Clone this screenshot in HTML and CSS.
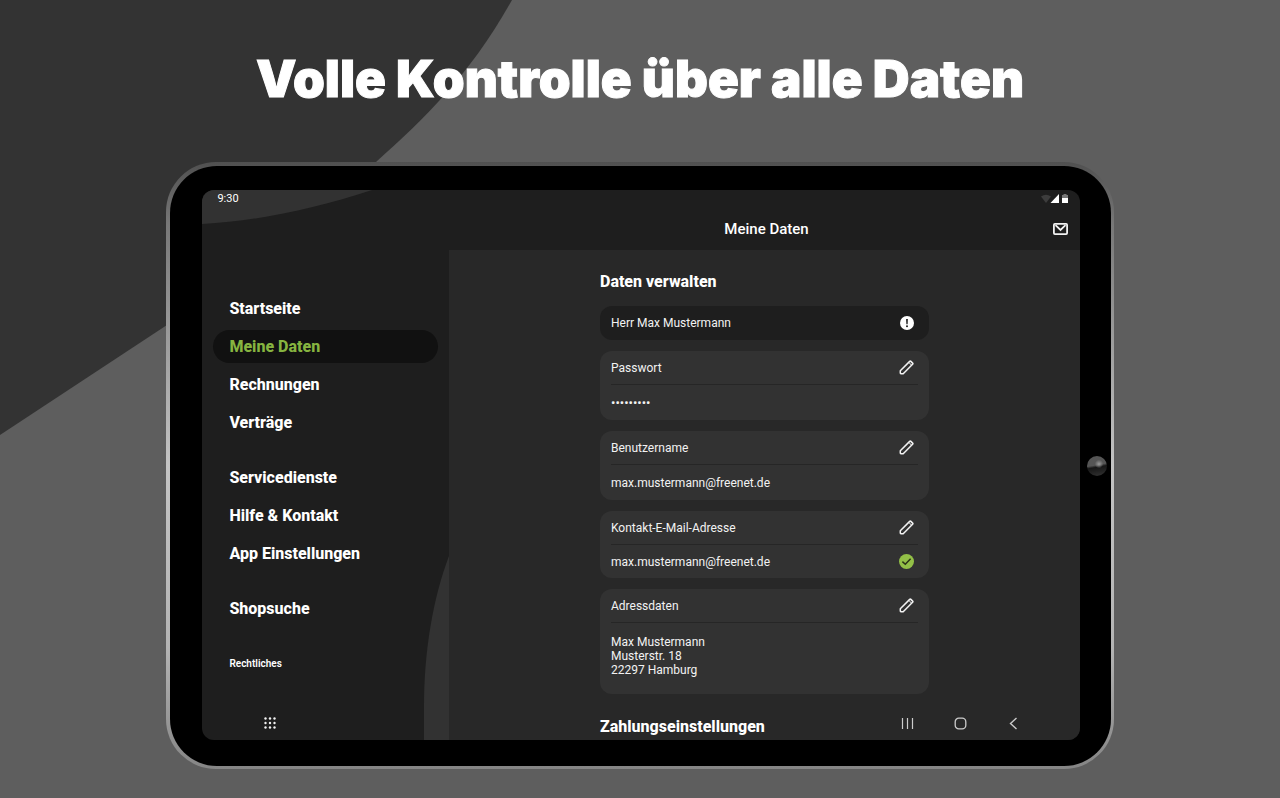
FILE: index.html
```
<!DOCTYPE html>
<html lang="de">

<head>
    <meta charset="UTF-8">
    <meta name="viewport" content="width=device-width, initial-scale=1.0">
    <title>Meine Daten</title>
    <link rel="stylesheet" href="styles.css">
</head>

<body>
    <svg class="page-shape" width="512" height="435" viewBox="0 0 512 435" aria-hidden="true">
        <path d="M0 0H512C470 75 425 118 376 162C310 217 240 275 167 325L0 435Z" fill="#333333" />
    </svg>

    <h1 class="headline">Volle Kontrolle über alle Daten</h1>

    <div class="tablet">
        <div class="bezel">
            <span class="camera"></span>
            <div class="screen">
                <svg class="shape-top" width="170" height="34" viewBox="0 0 170 34" aria-hidden="true">
                    <path d="M0 0H170C112 19 55 31 0 34Z" fill="#323232" />
                </svg>

                <div class="status-bar">
                    <span>9:30</span>
                    <svg width="28" height="10" viewBox="0 0 28 10" aria-hidden="true">
                        <path d="M0 2.5Q5 -1 10 2.5L5 9Z" fill="#3d3d3d" />
                        <path d="M18 0V9H9.500Z" fill="#ffffff" />
                        <path d="M22.500 0H25.500V1H27V4H21V1H22.500Z" fill="#777777" />
                        <path d="M21 4H27V8.500Q27 9 26.500 9H21.500Q21 9 21 8.500Z" fill="#ffffff" />
                    </svg>
                </div>

                <header class="app-bar">
                    <h2>Meine Daten</h2>
                    <button class="icon-btn mail" aria-label="Nachrichten">
                        <svg width="15" height="12" viewBox="0 0 15 12" fill="none" stroke="#f2f2f2" stroke-width="1.800">
                            <rect x="0.900" y="0.900" width="13.200" height="10.200" rx="1" />
                            <path d="M2.500 2.200L7.500 7L12.500 2.200" />
                        </svg>
                    </button>
                </header>

                <div class="columns">
                    <nav class="sidebar">
                        <svg class="shape-bottom" width="25" height="184" viewBox="0 0 25 184" aria-hidden="true">
                            <path d="M25 0V184H0V150C0 95 9 42 25 0Z" fill="#323232" />
                        </svg>
                        <div class="menu-group">
                            <a href="#start">Startseite</a>
                            <a href="#daten" class="active">Meine Daten</a>
                            <a href="#rechnungen">Rechnungen</a>
                            <a href="#vertraege">Verträge</a>
                        </div>
                        <div class="menu-group">
                            <a href="#dienste">Servicedienste</a>
                            <a href="#hilfe">Hilfe &amp; Kontakt</a>
                            <a href="#einstellungen">App Einstellungen</a>
                        </div>
                        <div class="menu-group">
                            <a href="#shops">Shopsuche</a>
                        </div>
                        <div class="menu-group">
                            <a href="#rechtliches" class="small">Rechtliches</a>
                        </div>
                    </nav>

                    <main class="content">
                        <div class="list">
                            <h3>Daten verwalten</h3>

                            <section class="card card-dark">
                                <div class="card-row">
                                    <span>Herr Max Mustermann</span>
                                    <svg width="14" height="14" viewBox="0 0 14 14" aria-hidden="true">
                                        <circle cx="7" cy="7" r="7" fill="#ffffff" />
                                        <path d="M6.100 3H7.900L7.600 8.200H6.400Z" fill="#1e1e1e" />
                                        <circle cx="7" cy="10.300" r="1" fill="#1e1e1e" />
                                    </svg>
                                </div>
                            </section>

                            <section class="card">
                                <div class="card-row card-head">
                                    <span>Passwort</span>
                                    <button class="icon-btn" aria-label="Passwort bearbeiten">
                                        <svg width="15" height="15" viewBox="0 0 15 15"><use href="#pencil" /></svg>
                                    </button>
                                </div>
                                <div class="card-row card-value">
                                    <span class="dots">•••••••••</span>
                                </div>
                            </section>

                            <section class="card">
                                <div class="card-row card-head">
                                    <span>Benutzername</span>
                                    <button class="icon-btn" aria-label="Benutzername bearbeiten">
                                        <svg width="15" height="15" viewBox="0 0 15 15"><use href="#pencil" /></svg>
                                    </button>
                                </div>
                                <div class="card-row card-value">
                                    <span>max.mustermann@freenet.de</span>
                                </div>
                            </section>

                            <section class="card">
                                <div class="card-row card-head">
                                    <span>Kontakt-E-Mail-Adresse</span>
                                    <button class="icon-btn" aria-label="Kontakt-E-Mail-Adresse bearbeiten">
                                        <svg width="15" height="15" viewBox="0 0 15 15"><use href="#pencil" /></svg>
                                    </button>
                                </div>
                                <div class="card-row card-value-short">
                                    <span>max.mustermann@freenet.de</span>
                                    <svg width="15" height="15" viewBox="0 0 15 15" aria-hidden="true">
                                        <circle cx="7.500" cy="7.500" r="7.500" fill="#93c047" />
                                        <path d="M3.400 7.600L6.300 10.300L11.600 4.800" fill="none" stroke="#2b3318" stroke-width="1.500" />
                                    </svg>
                                </div>
                            </section>

                            <section class="card">
                                <div class="card-row card-head">
                                    <span>Adressdaten</span>
                                    <button class="icon-btn" aria-label="Adressdaten bearbeiten">
                                        <svg width="15" height="15" viewBox="0 0 15 15"><use href="#pencil" /></svg>
                                    </button>
                                </div>
                                <address>
                                    Max Mustermann<br>
                                    Musterstr. 18<br>
                                    22297 Hamburg
                                </address>
                            </section>

                            <h3 class="next-title">Zahlungseinstellungen</h3>
                        </div>
                    </main>
                </div>

                <!-- Android navigation, floats over the app -->
                <div class="system-nav">
                    <button class="icon-btn apps" aria-label="Apps">
                        <svg width="14" height="14" viewBox="0 0 14 14" fill="#f2f2f2">
                            <circle cx="2.500" cy="2.500" r="1.200" /><circle cx="7" cy="2.500" r="1.200" /><circle cx="11.500" cy="2.500" r="1.200" />
                            <circle cx="2.500" cy="7" r="1.200" /><circle cx="7" cy="7" r="1.200" /><circle cx="11.500" cy="7" r="1.200" />
                            <circle cx="2.500" cy="11.500" r="1.200" /><circle cx="7" cy="11.500" r="1.200" /><circle cx="11.500" cy="11.500" r="1.200" />
                        </svg>
                    </button>
                    <button class="icon-btn" aria-label="Letzte Apps">
                        <svg width="13" height="13" viewBox="0 0 13 13" stroke="#cccccc" stroke-width="1.200">
                            <path d="M1.500 1V12M6.500 1V12M11.500 1V12" />
                        </svg>
                    </button>
                    <button class="icon-btn" aria-label="Startbildschirm">
                        <svg width="13" height="13" viewBox="0 0 13 13" fill="none" stroke="#cccccc" stroke-width="1.300">
                            <rect x="1.200" y="1.200" width="10.600" height="10.600" rx="3.600" />
                        </svg>
                    </button>
                    <button class="icon-btn" aria-label="Zurück">
                        <svg width="13" height="13" viewBox="0 0 13 13" fill="none" stroke="#cccccc" stroke-width="1.400">
                            <path d="M9.500 1L3.500 6.500L9.500 12" />
                        </svg>
                    </button>
                </div>
            </div>
        </div>
    </div>

    <svg class="sprite" width="0" height="0" aria-hidden="true">
        <symbol id="pencil" viewBox="0 0 15 15">
            <path d="M1.300 10.800L10.700 1.400Q11.300 0.800 11.900 1.400L13.600 3.100Q14.200 3.700 13.600 4.300L4.200 13.700H1.900Q1.300 13.700 1.300 13.100Z" fill="none" stroke="#f2f2f2" stroke-width="1.500" stroke-linejoin="round" />
            <path d="M10 2.600L12.400 5" fill="none" stroke="#f2f2f2" stroke-width="1" />
        </symbol>
    </svg>
</body>

</html>
```
FILE: styles.css
```
* {
    box-sizing: border-box;
    margin: 0;
    padding: 0;
}

body {
    min-height: 100vh;
    padding: 49px 0 30px;
    background-color: #5e5e5e;
    color: #ffffff;
    font-family: Roboto, "Liberation Sans", sans-serif;
}

.page-shape {
    position: absolute;
    top: 0;
    left: 0;
    z-index: -1;
}

.sprite {
    position: absolute;
}

.headline {
    margin-bottom: 53px;
    font-family: Inter, "Liberation Sans", sans-serif;
    font-size: 51px;
    font-weight: 900;
    line-height: 60px;
    text-align: center;
    -webkit-text-stroke: 1px #ffffff;
}

/* tablet */

.tablet {
    width: 74%;
    min-width: 800px;
    margin: 0 auto;
    padding: 4px 3px 3px 4px;
    border-radius: 50px;
    background: linear-gradient(#505050, #777777 10%, #c4c4c4 50%, #b4b4b4 80%, #858585);
}

.bezel {
    position: relative;
    padding: 24px 31px 26px 32px;
    border-radius: 47px;
    background-color: #000000;
}

.camera {
    position: absolute;
    top: 50%;
    right: 4px;
    width: 20px;
    height: 20px;
    margin-top: -10px;
    border-radius: 50%;
    background: radial-gradient(circle at 60% 40%, #999999, transparent 25%), linear-gradient(170deg, #555555 45%, #161616 55%, #333333);
}

.screen {
    position: relative;
    overflow: hidden;
    border-radius: 12px;
    background-color: #1e1e1e;
}

.shape-top {
    position: absolute;
    top: 0;
    left: 0;
}

.status-bar {
    position: relative;
    display: flex;
    align-items: center;
    justify-content: space-between;
    height: 17px;
    padding: 0 11px 0 15px;
    font-size: 11px;
}

.app-bar {
    position: relative;
    display: grid;
    grid-template-columns: 1fr auto 1fr;
    align-items: center;
    height: 43px;
    margin-left: 247px;
    padding: 0 12px 0 16px;
}

.app-bar h2 {
    grid-column: 2;
    font-size: 15px;
    font-weight: 500;
    line-height: 20px;
}

.icon-btn {
    display: flex;
    border: none;
    background: none;
    cursor: pointer;
}

.mail {
    justify-self: end;
}

.columns {
    display: flex;
}

/* sidebar */

.sidebar {
    position: relative;
    flex: 0 0 247px;
    display: flex;
    flex-direction: column;
    gap: 22px;
    padding: 42px 11px 0;
}

.shape-bottom {
    position: absolute;
    right: 0;
    bottom: 0;
}

.menu-group {
    display: flex;
    flex-direction: column;
    gap: 5px;
}

.menu-group a {
    padding: 0 16px;
    border-radius: 17px;
    color: #ffffff;
    font-size: 16px;
    font-weight: 800;
    line-height: 33px;
    text-decoration: none;
}

.menu-group .active {
    background-color: #111111;
    color: #86b440;
}

.menu-group .small {
    font-size: 10px;
    font-weight: 600;
}

/* content */

.content {
    flex: 1;
    padding: 22px 20px 3px;
    background-color: #282828;
}

.list {
    display: flex;
    flex-direction: column;
    gap: 11px;
    max-width: 329px;
    margin: 0 auto;
}

h3 {
    font-size: 16px;
    font-weight: 800;
    line-height: 20px;
}

.list h3:first-child {
    margin-bottom: 3px;
}

.list .next-title {
    margin-top: 12px;
}

.card {
    padding: 0 11px;
    border-radius: 12px;
    background-color: #323232;
    color: #f2f2f2;
    font-size: 12px;
}

.card-dark {
    background-color: #1e1e1e;
}

.card-row {
    display: flex;
    align-items: center;
    justify-content: space-between;
    height: 34px;
    padding-right: 4px;
}

.card-head {
    border-bottom: 1px solid #262626;
}

.card-value {
    height: 35px;
}

.card-value-short {
    height: 33px;
}

.dots {
    font-size: 13px;
}

address {
    padding: 12px 0 17px;
    font-style: normal;
    line-height: 14px;
}

/* system navigation */

.system-nav {
    position: absolute;
    right: 60px;
    bottom: 10px;
    left: 61px;
    display: flex;
    align-items: center;
    gap: 40px;
}

.apps {
    margin-right: auto;
}
```
